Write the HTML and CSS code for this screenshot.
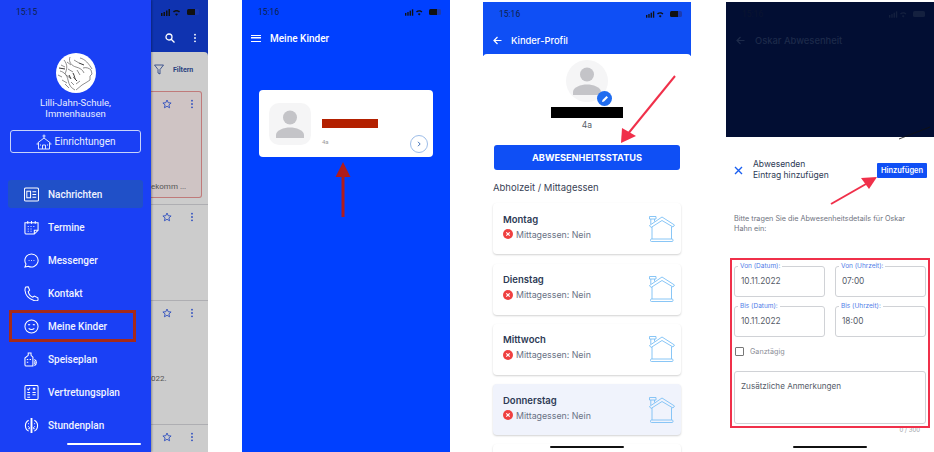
FILE: index.html
```html
<!DOCTYPE html>
<html lang="de">
<head>
    <meta charset="UTF-8">
    <meta name="viewport" content="width=device-width, initial-scale=1.0">
    <title>Meine Kinder</title>
    <link rel="stylesheet" href="styles.css">
</head>
<body>
    <svg class="defs" width="0" height="0">
        <symbol id="person" viewBox="0 0 42 42">
            <circle cx="21" cy="14.5" r="7" fill="#c4c4c8"/>
            <path d="M7 35v-3c0-5 8-7.500 14-7.500S35 27 35 32v3z" fill="#c4c4c8"/>
        </symbol>
        <symbol id="house" viewBox="0 0 26 26" fill="none" stroke="#7cc0f5" stroke-width="0.900">
            <path d="M.5 9.500 13 1l12.500 8-1.500 2L13 4.500 2 11.500z"/>
            <path d="M3 11v12M22.500 10.500V23"/>
            <path d="M.5.500h6.500v2.500H.5zM1.800 3v5M5.500 3v2.500"/>
            <rect x="1.500" y="23" width="22.500" height="2.500" rx="1"/>
        </symbol>
        <symbol id="no" viewBox="0 0 10 10">
            <circle cx="5" cy="5" r="5" fill="#ef4040"/>
            <path d="M3.300 3.300l3.400 3.400M6.700 3.300 3.300 6.700" stroke="#fff" stroke-width="1.200"/>
        </symbol>
        <symbol id="star" viewBox="0 0 10 10" fill="none" stroke="#2f4fc0" stroke-width="0.900">
            <path d="M5 1l1.200 2.700 2.900.3-2.200 1.900.7 2.900L5 7.300 2.400 8.800l.7-2.900L.9 4l2.900-.3z"/>
        </symbol>
        <symbol id="dots" viewBox="0 0 4 12">
            <circle cx="2" cy="2" r="1.100"/>
            <circle cx="2" cy="6" r="1.100"/>
            <circle cx="2" cy="10" r="1.100"/>
        </symbol>
        <symbol id="signal" viewBox="0 0 24 7">
            <rect x="0" y="4" width="1.500" height="3"/>
            <rect x="2.500" y="3" width="1.500" height="4"/>
            <rect x="5" y="1.500" width="1.500" height="5.500"/>
            <rect x="7.500" y="0" width="1.500" height="7"/>
            <path d="M12 2.500c2-2 5-2 7 0l-1 1c-1.500-1.300-3.500-1.300-5 0zM14 5c.8-.8 2.200-.8 3 0l-1.500 1.800z"/>
        </symbol>
    </svg>

    <div class="screens">
        <!-- drawer open -->
        <div class="phone">
            <div class="drawer">
                <div class="status"><span class="time">15:15</span></div>
                <div class="school-logo">
                    <svg width="40" height="40" viewBox="0 0 40 40">
                        <circle cx="20" cy="20" r="20" fill="#fff"/>
                        <g fill="none" stroke="#444" stroke-width="0.600">
                            <path d="M8 7c4 5 3 9 1 14M14 4c-2 5 2 9 6 10s7 3 8 6M4 18c4 1 7 4 8 9s3 8 7 10"/>
                            <path d="M24 5c5 1 9 6 12 11M27 15c3-1 6 0 8 2l1 4-2 2 0 4-3 2-5 3-6 5"/>
                            <path d="M10 22l4 3M12 16l5 3M6 27l5 3M17 24l4 4M5 12l4 2M11 9l4 3M18 7l5 3M15 29l3 3M21 17l3 5M20 31l4-3M9 31l4 4M2 22l4 2"/>
                        </g>
                        <g fill="none" stroke="#222" stroke-width="0.900">
                            <path d="M17 20c2 3 1 6 4 8M23 10l5 2M3 15l6 1M13 22l2 4"/>
                        </g>
                    </svg>
                </div>
                <div class="school-name">Lilli-Jahn-Schule,<br>Immenhausen</div>
                <div class="facility-btn">
                    <svg width="16" height="16" viewBox="0 0 16 16" fill="none" stroke="#dfe6ff" stroke-width="1">
                        <path d="M8 .5V4M6.500 2h3M1.500 9 8 4l6.500 5M2.500 8.500V15h11V8.500M6.500 15v-4h3v4M.5 10h2M13.500 10h2M4 11h1M11 11h1"/>
                    </svg>
                    <span>Einrichtungen</span>
                </div>
                <ul class="menu">
                    <li class="menu-item selected">
                        <svg class="menu-icon" viewBox="0 0 16 16" fill="none" stroke="#fff" stroke-width="1.100">
                            <rect x="0.500" y="1" width="15" height="14" rx="1.500"/>
                            <rect x="3" y="4.500" width="4" height="7"/>
                            <path d="M9 5h4M9 8h4M9 11h4"/>
                        </svg>
                        Nachrichten
                    </li>
                    <li class="menu-item">
                        <svg class="menu-icon" viewBox="0 0 16 16" fill="none" stroke="#fff" stroke-width="1.100">
                            <path d="M11 15H2.500a1.500 1.500 0 0 1-1.500-1.500V3h14v8z"/>
                            <path d="M4 1v3M8 1v3M12 1v3M15 11h-4v4M4 7h1M7 7h1M10 7h1M4 9.500h1M7 9.500h1M4 12h1M7 12h1"/>
                        </svg>
                        Termine
                    </li>
                    <li class="menu-item">
                        <svg class="menu-icon" viewBox="0 0 16 16" fill="none" stroke="#fff" stroke-width="1.100">
                            <path d="M8 1a7 7 0 1 1-3.400 13.100L1 15l1.100-3.200A7 7 0 0 1 8 1z"/>
                            <path d="M5 8h.8M7.600 8h.8M10.200 8h.8" stroke-width="1.300"/>
                        </svg>
                        Messenger
                    </li>
                    <li class="menu-item">
                        <svg class="menu-icon" viewBox="0 0 16 16" fill="none" stroke="#fff" stroke-width="1.100">
                            <path d="M2 1 4.500.8 6 4.500 4.500 6c.5 2.500 2.500 5 5 6l1.500-1.300 3.800 1.800L15 15c-1 .8-3 1-5 .2C5 13.500 1.500 9 1 4.500 1 3 1.300 1.800 2 1z"/>
                        </svg>
                        Kontakt
                    </li>
                    <li class="menu-item">
                        <svg class="menu-icon" viewBox="0 0 16 16" fill="none" stroke="#fff" stroke-width="1.100">
                            <circle cx="8" cy="8" r="7"/>
                            <path d="M4.500 6.500c.5-.7 1.300-.7 2 0M9.500 6.500c.5-.7 1.300-.7 2 0M5 10c1.500 1.600 4.500 1.600 6 0"/>
                        </svg>
                        Meine Kinder
                    </li>
                    <li class="menu-item">
                        <svg class="menu-icon" viewBox="0 0 16 16" fill="none" stroke="#fff" stroke-width="1.100">
                            <path d="M4.500 1h3v2.500l2 2V15H2.500a1.500 1.500 0 0 1-1.500-1.500V6.500l3.500-3z"/>
                            <path d="M3 8h1.500M6 8h1.500M3 11h1.500M11 8a3.500 3.500 0 0 1 0 6.500M11 10a1.500 1.500 0 0 1 0 2.500"/>
                        </svg>
                        Speiseplan
                    </li>
                    <li class="menu-item">
                        <svg class="menu-icon" viewBox="0 0 16 16" fill="none" stroke="#fff" stroke-width="1.100">
                            <rect x="1" y="0.500" width="14" height="15" rx="1.500"/>
                            <path d="M3.500 4l1.200 1.200L6.500 3M9.500 3l2.500 2.500M12 3 9.500 5.500M3.500 8h3M9 8h3.500M3.500 10.500h3M9 10.500h3.500M3.500 13h3"/>
                        </svg>
                        Vertretungsplan
                    </li>
                    <li class="menu-item">
                        <svg class="menu-icon" viewBox="0 0 16 16" fill="none" stroke="#fff" stroke-width="1.200">
                            <path d="M5 2.500a6.500 6.500 0 0 0 0 11.500M11 2.500a6.500 6.500 0 0 1 0 11.500"/>
                            <path d="M8 0v16" stroke-width="2"/>
                            <path d="M4.500 6h.8M4.500 9h.8M11 6h.8M11 9h.8M5 12l1-2M11 12l-1-2" stroke-width="1.200"/>
                        </svg>
                        Stundenplan
                    </li>
                </ul>
                <div class="home-bar light"></div>
            </div>
            <div class="behind">
                <div class="behind-top">
                    <div class="status-icons">
                        <svg class="signal" width="24" height="7"><use href="#signal"/></svg>
                        <span class="battery"></span>
                    </div>
                    <div class="behind-actions">
                        <svg width="10" height="10" viewBox="0 0 10 10" fill="none" stroke="#fff" stroke-width="1.300">
                            <circle cx="4" cy="4" r="3"/>
                            <path d="M6.200 6.200 9.500 9.500"/>
                        </svg>
                        <svg class="dots-white" width="4" height="10"><use href="#dots"/></svg>
                    </div>
                </div>
                <div class="news">
                    <div class="filter-row">
                        <svg width="10" height="11" viewBox="0 0 10 11" fill="none" stroke="#1f3a80" stroke-width="0.800">
                            <path d="M.5 1h9L6 5.500V10L4 9V5.500z"/>
                        </svg>
                        <b>Filtern</b>
                    </div>
                    <div class="news-card pink">
                        <div class="news-actions">
                            <svg width="10" height="10"><use href="#star"/></svg>
                            <svg class="dots-blue" width="4" height="10"><use href="#dots"/></svg>
                        </div>
                        <span class="news-text pink-text">ekomm ...</span>
                    </div>
                    <div class="news-card row-two">
                        <div class="news-actions">
                            <svg width="10" height="10"><use href="#star"/></svg>
                            <svg class="dots-blue" width="4" height="10"><use href="#dots"/></svg>
                        </div>
                    </div>
                    <div class="news-card row-three">
                        <div class="news-actions">
                            <svg width="10" height="10"><use href="#star"/></svg>
                            <svg class="dots-blue" width="4" height="10"><use href="#dots"/></svg>
                        </div>
                        <span class="news-text year-text">022.</span>
                    </div>
                    <div class="news-card row-four">
                        <div class="news-actions">
                            <svg width="10" height="10"><use href="#star"/></svg>
                            <svg class="dots-blue" width="4" height="10"><use href="#dots"/></svg>
                        </div>
                    </div>
                </div>
            </div>
            <div class="mark-box menu-mark"></div>
        </div>

        <!-- Meine Kinder -->
        <div class="phone kids">
            <div class="status spread">
                <span class="time">15:16</span>
                <div class="status-icons small">
                    <svg width="24" height="7"><use href="#signal"/></svg>
                    <span class="battery"></span>
                </div>
            </div>
            <div class="kids-bar">
                <span class="hamburger"></span>
                <span>Meine Kinder</span>
            </div>
            <div class="kid-card">
                <div class="kid-photo"><svg width="42" height="42"><use href="#person"/></svg></div>
                <div class="kid-info">
                    <div class="kid-redacted"></div>
                    <div class="kid-class">4a</div>
                </div>
                <div class="kid-next">
                    <svg width="6" height="6" viewBox="0 0 6 6" fill="none" stroke="#3f6fb5" stroke-width="1"><path d="M2 .8 4.200 3 2 5.200"/></svg>
                </div>
            </div>
            <svg class="arrow kids-arrow" width="20" height="58" viewBox="0 0 20 58">
                <path d="M10 0 17.500 15h-6v40h-3V15h-6z" fill="#b01c1c"/>
            </svg>
        </div>

        <!-- Kinder-Profil -->
        <div class="phone profile">
            <div class="app-head">
                <div class="status spread">
                    <span class="time">15:16</span>
                    <div class="status-icons small">
                        <svg width="24" height="7"><use href="#signal"/></svg>
                        <span class="battery"></span>
                    </div>
                </div>
                <div class="head-title">
                    <svg width="9" height="9" viewBox="0 0 9 9" fill="none" stroke="#fff" stroke-width="1.200"><path d="M8.500 4.500H1M4.500 1 1 4.500 4.500 8"/></svg>
                    <span>Kinder-Profil</span>
                </div>
            </div>
            <div class="profile-body">
                <div class="profile-photo">
                    <svg width="42" height="42"><use href="#person"/></svg>
                    <span class="edit-badge">
                        <svg width="8" height="8" viewBox="0 0 8 8"><path d="M1 7 1.500 5 5.500 1 7 2.500 3 6.500z" fill="#fff"/></svg>
                    </span>
                </div>
                <div class="profile-redacted"></div>
                <div class="profile-class">4a</div>
                <div class="absence-btn">ABWESENHEITSSTATUS</div>
                <div class="section-title">Abholzeit / Mittagessen</div>
                <div class="day-card">
                    <div class="day-text">
                        <div class="day-name">Montag</div>
                        <div class="day-lunch"><svg width="10" height="10"><use href="#no"/></svg>Mittagessen: Nein</div>
                    </div>
                    <svg width="26" height="26"><use href="#house"/></svg>
                </div>
                <div class="day-card">
                    <div class="day-text">
                        <div class="day-name">Dienstag</div>
                        <div class="day-lunch"><svg width="10" height="10"><use href="#no"/></svg>Mittagessen: Nein</div>
                    </div>
                    <svg width="26" height="26"><use href="#house"/></svg>
                </div>
                <div class="day-card">
                    <div class="day-text">
                        <div class="day-name">Mittwoch</div>
                        <div class="day-lunch"><svg width="10" height="10"><use href="#no"/></svg>Mittagessen: Nein</div>
                    </div>
                    <svg width="26" height="26"><use href="#house"/></svg>
                </div>
                <div class="day-card today">
                    <div class="day-text">
                        <div class="day-name">Donnerstag</div>
                        <div class="day-lunch"><svg width="10" height="10"><use href="#no"/></svg>Mittagessen: Nein</div>
                    </div>
                    <svg width="26" height="26"><use href="#house"/></svg>
                </div>
                <div class="day-card"></div>
            </div>
            <div class="home-bar"></div>
            <svg class="arrow profile-arrow" width="60" height="72" viewBox="0 0 60 72">
                <path d="M58 3 10 62" stroke="#f0304a" stroke-width="2" fill="none"/>
                <path d="M4 70 5 55 19 63z" fill="#f0304a"/>
            </svg>
        </div>

        <!-- Abwesenheit -->
        <div class="phone absence">
            <div class="dim-head">
                <div class="status spread">
                    <span class="time">15:16</span>
                    <div class="status-icons small">
                        <svg width="24" height="7"><use href="#signal"/></svg>
                        <span class="battery"></span>
                    </div>
                </div>
                <div class="head-title">
                    <svg width="9" height="9" viewBox="0 0 9 9" fill="none" stroke="#1d2a4a" stroke-width="1.200"><path d="M8.500 4.500H1M4.500 1 1 4.500 4.500 8"/></svg>
                    <span>Oskar Abwesenheit</span>
                </div>
            </div>
            <div class="sheet">
                <div class="sheet-head">
                    <svg width="9" height="9" viewBox="0 0 9 9" stroke="#1a5ff0" stroke-width="1.400"><path d="M1 1l7 7M8 1 1 8"/></svg>
                    <div class="sheet-title">Abwesenden<br>Eintrag hinzufügen</div>
                    <div class="add-btn">Hinzufügen</div>
                </div>
                <p class="sheet-note">Bitte tragen Sie die Abwesenheitsdetails für Oskar Hahn ein:</p>
                <div class="form-grid">
                    <div class="field"><label>Von (Datum):</label>10.11.2022</div>
                    <div class="field"><label>Von (Uhrzeit):</label>07:00</div>
                    <div class="field"><label>Bis (Datum):</label>10.11.2022</div>
                    <div class="field"><label>Bis (Uhrzeit):</label>18:00</div>
                </div>
                <div class="all-day"><span class="check"></span>Ganztägig</div>
                <div class="notes">Zusätzliche Anmerkungen</div>
                <div class="counter">0 / 300</div>
            </div>
            <div class="home-bar"></div>
            <div class="mark-box form-mark"></div>
            <svg class="arrow add-arrow" width="50" height="32" viewBox="0 0 50 32">
                <path d="M1 28 36 8" stroke="#f0304a" stroke-width="2" fill="none"/>
                <path d="M47 1 31 2 39 13z" fill="#f0304a"/>
            </svg>
            <svg class="arrow sheet-line" width="32" height="14" viewBox="0 0 32 14">
                <path d="M0 13 31 1" stroke="#111" stroke-width="0.800"/>
            </svg>
        </div>
    </div>
</body>
</html>
```

FILE: styles.css
```css
* {
    box-sizing: border-box;
}

body {
    margin: 0;
    background-color: #ffffff;
    font-family: Roboto, sans-serif;
}

.defs {
    position: absolute;
}

.screens {
    display: flex;
    gap: 34px;
    width: 934px;
    height: 452px;
}

.phone {
    position: relative;
    width: 208px;
    height: 452px;
    overflow: hidden;
    flex-shrink: 0;
}

.status {
    height: 24px;
    display: flex;
    align-items: center;
    flex-shrink: 0;
}

.time {
    font-size: 8.5px;
    color: #10204a;
}

.spread {
    justify-content: space-between;
}

.status-icons {
    display: flex;
    align-items: center;
    justify-content: flex-end;
    height: 24px;
    padding-right: 9px;
    gap: 2px;
    fill: #111111;
}

.status-icons svg {
    width: 24px;
}

.status-icons.small svg {
    width: 22px;
}

.battery {
    width: 12px;
    height: 6px;
    border-radius: 1.500px;
    background: linear-gradient(90deg, #111 65%, #1b3ab0 65%);
}

.home-bar {
    position: absolute;
    left: 67px;
    bottom: 4px;
    width: 74px;
    height: 2.500px;
    border-radius: 2px;
    background-color: #111111;
}

.home-bar.light {
    bottom: 7px;
    background-color: #ffffff;
}

.arrow {
    position: absolute;
}

.mark-box {
    position: absolute;
}

/* first phone */
.phone:first-child {
    display: flex;
}

.drawer {
    width: 151px;
    height: 452px;
    background-color: #1a40f5;
    box-shadow: 1px 0 2px rgba(0, 0, 0, 0.3);
    display: flex;
    flex-direction: column;
    align-items: center;
    color: #ffffff;
    z-index: 1;
}

.drawer .status {
    width: 100%;
    padding-left: 16px;
}

.school-logo {
    margin-top: 29px;
    height: 40px;
}

.school-name {
    margin-top: 4px;
    font-size: 9.500px;
    line-height: 11px;
    text-align: center;
    color: #e8edff;
}

.facility-btn {
    margin-top: 11px;
    width: 131px;
    height: 23px;
    border: 1px solid #c8d4fa;
    border-radius: 3px;
    display: flex;
    align-items: center;
    justify-content: center;
    gap: 3px;
    font-size: 10px;
    color: #e8edff;
}

.menu {
    list-style: none;
    margin: 27px 0 0;
    padding: 0;
    width: 135px;
    display: flex;
    flex-direction: column;
    gap: 5px;
}

.menu-item {
    height: 28px;
    padding-left: 16px;
    display: flex;
    align-items: center;
    gap: 9px;
    font-size: 10px;
    font-weight: 500;
    color: #f0f3ff;
    border-radius: 3px;
}

.menu-item.selected {
    background-color: #2050c8;
}

.menu-icon {
    width: 15px;
    height: 15px;
}

.menu-mark {
    left: 9px;
    top: 310px;
    width: 127px;
    height: 32px;
    border: 3px solid #a52a1a;
    z-index: 2;
}

.behind {
    width: 57px;
    height: 452px;
    background-color: #0f33b0;
    display: flex;
    flex-direction: column;
}

.behind-top {
    height: 52px;
}

.behind-actions {
    display: flex;
    align-items: center;
    gap: 18px;
    padding-left: 14px;
    height: 28px;
}

.dots-white {
    fill: #ffffff;
}

.dots-blue {
    fill: #2f4fc0;
}

.news {
    flex: 1;
    background-color: #cccccc;
    border-radius: 0 4px 0 0;
}

.filter-row {
    height: 35px;
    display: flex;
    align-items: center;
    gap: 9px;
    padding: 0 0 0 3px;
    font-size: 7px;
    color: #2a3f80;
}

.news-card {
    border-bottom: 1px solid #aeaeb2;
}

.news-actions {
    display: flex;
    align-items: center;
    gap: 18px;
    padding: 7px 0 0 11px;
}

.news-text {
    display: block;
    font-size: 8px;
    color: #555555;
}

.pink {
    margin: 4px 6px 6px 0;
    height: 107px;
    background-color: #cfc4c4;
    border: 1px solid #c07a7a;
    border-left: none;
    border-radius: 0 3px 3px 0;
}

.pink-text {
    margin-top: 73px;
}

.row-two {
    height: 97px;
    border-top: 1px solid #aeaeb2;
}

.row-three {
    height: 124px;
}

.year-text {
    margin-top: 56px;
}

.row-four {
    border-bottom: none;
}

/* second phone */
.kids {
    background-color: #0040ff;
}

.kids .status {
    padding: 0 0 0 16px;
}

.kids-bar {
    height: 28px;
    display: flex;
    align-items: center;
    gap: 9px;
    padding-left: 9px;
    font-size: 10px;
    font-weight: 500;
    color: #ffffff;
}

.hamburger {
    width: 10px;
    height: 7px;
    border-top: 1.500px solid #ffffff;
    border-bottom: 1.500px solid #ffffff;
    background: linear-gradient(#ffffff, #ffffff) center / 100% 1.500px no-repeat;
}

.kid-card {
    position: relative;
    margin: 38px 17px 0;
    height: 67px;
    background-color: #ffffff;
    border-radius: 4px;
    display: flex;
    align-items: center;
    padding: 0 10px;
    gap: 11px;
}

.kid-photo {
    width: 42px;
    height: 42px;
    background-color: #f5f5f6;
    border-radius: 10px;
}

.kid-info {
    padding-top: 17px;
}

.kid-redacted {
    width: 56px;
    height: 9px;
    background-color: #b32000;
}

.kid-class {
    margin-top: 10px;
    font-size: 6px;
    color: #9a9a9a;
}

.kid-next {
    position: absolute;
    right: 5px;
    bottom: 4px;
    width: 18px;
    height: 18px;
    border: 1px solid #9dbde8;
    border-radius: 50%;
    display: flex;
    align-items: center;
    justify-content: center;
}

.kids-arrow {
    left: 91px;
    top: 162px;
}

/* third phone */
.profile {
    margin: 0 1px 0 -1px;
    background-color: #ffffff;
}

.app-head {
    height: 54px;
    margin-top: 2px;
    background-color: #0f4ff5;
    margin-bottom: -2px;
}

.app-head .status {
    padding: 0 0 0 16px;
}

.head-title {
    height: 28px;
    display: flex;
    align-items: center;
    gap: 9px;
    padding-left: 10px;
    font-family: Inter, sans-serif;
    font-size: 9.400px;
    font-weight: 500;
    color: #ffffff;
}

.profile-body {
    position: relative;
    border-radius: 4px 4px 0 0;
    background-color: #ffffff;
    padding: 6px 10px 0;
    font-family: Inter, sans-serif;
    display: flex;
    flex-direction: column;
    align-items: center;
}

.profile-photo {
    position: relative;
    width: 42px;
    height: 42px;
    border-radius: 50%;
    background-color: #f5f5f6;
    flex-shrink: 0;
}

.edit-badge {
    position: absolute;
    right: -4px;
    bottom: -4px;
    width: 15px;
    height: 15px;
    border-radius: 50%;
    background-color: #1f6cf0;
    display: flex;
    align-items: center;
    justify-content: center;
}

.profile-redacted {
    margin-top: 5px;
    width: 72px;
    height: 11px;
    background-color: #000000;
}

.profile-class {
    margin-top: 2px;
    font-size: 8.500px;
    line-height: 11px;
    color: #555c66;
}

.absence-btn {
    margin-top: 14px;
    width: 186px;
    height: 25px;
    flex-shrink: 0;
    border-radius: 3px;
    background-color: #0f4ff5;
    display: flex;
    align-items: center;
    justify-content: center;
    font-size: 9.200px;
    font-weight: 700;
    color: #ffffff;
}

.section-title {
    align-self: flex-start;
    margin-top: 12px;
    font-size: 9.500px;
    line-height: 12px;
    color: #3a4356;
}

.day-card {
    width: 188px;
    height: 51px;
    flex-shrink: 0;
    margin-top: 9.300px;
    padding: 0 6px 0 10px;
    background-color: #ffffff;
    border-radius: 4px;
    box-shadow: 0 1px 2px rgba(0, 0, 0, 0.18);
    display: flex;
    align-items: center;
    justify-content: space-between;
}

.day-card.today {
    background-color: #f0f3fc;
}

.day-text {
    margin-bottom: 4px;
}

.day-name {
    font-size: 9.500px;
    font-weight: 600;
    color: #2d3a55;
    line-height: 11px;
}

.day-lunch {
    margin-top: 4px;
    display: flex;
    align-items: center;
    gap: 3px;
    font-size: 8.800px;
    line-height: 11px;
    color: #6a7285;
}

.profile-arrow {
    left: 134px;
    top: 73px;
}

/* fourth phone */
.absence {
    background-color: #ffffff;
}

.absence .time {
    color: #0a1430;
}

.absence .status-icons {
    fill: #14203f;
}

.absence .battery {
    background: #14203f;
}

.dim-head {
    height: 135px;
    margin-top: 2px;
    background-color: #020e33;
}

.dim-head .status {
    padding-left: 16px;
}

.dim-head .head-title {
    color: #1d2a4a;
    gap: 10px;
}

.sheet {
    position: relative;
    background-color: #ffffff;
    border-radius: 4px 4px 0 0;
    padding: 22px 8px 0;
    font-family: Inter, sans-serif;
}

.sheet-head {
    display: flex;
    align-items: center;
    gap: 10px;
}

.sheet-title {
    flex: 1;
    font-size: 8.500px;
    line-height: 11px;
    color: #2d3a55;
}

.add-btn {
    margin-right: -1px;
    width: 50px;
    height: 15px;
    border-radius: 1px;
    background-color: #0f4ff5;
    display: flex;
    align-items: center;
    justify-content: center;
    font-size: 7.500px;
    font-weight: 600;
    color: #ffffff;
}

.sheet-note {
    margin: 33px 0 0;
    padding-right: 14px;
    font-size: 7.250px;
    line-height: 9.500px;
    color: #6f7480;
}

.form-grid {
    margin-top: 33px;
    display: grid;
    grid-template-columns: 91px 91px;
    column-gap: 10px;
    row-gap: 9px;
}

.field {
    position: relative;
    height: 31px;
    border: 1px solid #d0d2d6;
    border-radius: 3px;
    padding: 8px 0 0 6px;
    font-size: 8.300px;
    line-height: 12px;
    color: #555b68;
}

.field label {
    position: absolute;
    left: 3px;
    top: -4px;
    padding: 0 2px;
    background-color: #ffffff;
    font-size: 6.500px;
    line-height: 7px;
    color: #4f7de8;
}

.all-day {
    margin-top: 10px;
    padding-left: 1px;
    display: flex;
    align-items: center;
    gap: 6px;
    font-size: 7.200px;
    color: #8a8e96;
    height: 9px;
}

.check {
    width: 9px;
    height: 9px;
    border: 1px solid #777777;
    border-radius: 1px;
}

.notes {
    margin-top: 15px;
    height: 53px;
    border: 1px solid #d0d2d6;
    border-radius: 3px;
    padding: 8px 6px 0;
    font-size: 8.100px;
    line-height: 12px;
    color: #555b68;
}

.counter {
    margin-top: 2px;
    padding-right: 6px;
    text-align: right;
    font-size: 6px;
    color: #9a9ea6;
}

.form-mark {
    left: 4px;
    top: 258px;
    width: 200px;
    height: 170px;
    border: 2.500px solid #f0304a;
}

.add-arrow {
    left: 104px;
    top: 176px;
}

.sheet-line {
    left: 173px;
    top: 126px;
}
```
